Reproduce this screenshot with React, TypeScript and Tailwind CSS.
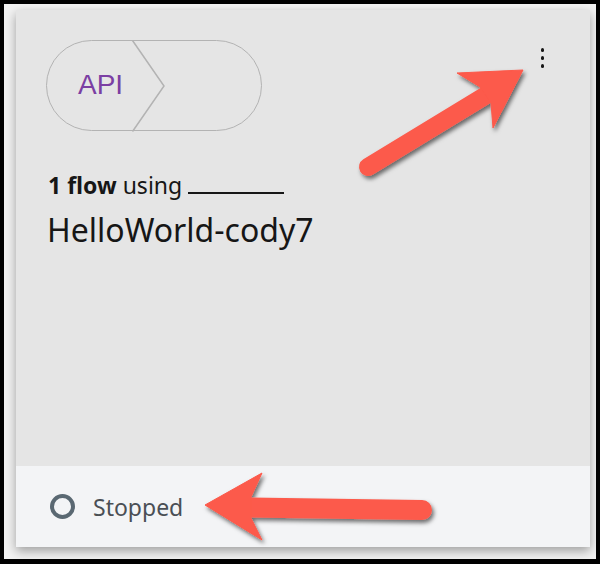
import type { FC } from 'react';

const Arrows: FC = () => (
  <svg className="absolute inset-0 pointer-events-none" width="600" height="564" viewBox="0 0 600 564">
    <defs>
      <filter id="arrowShadow" x="-20%" y="-20%" width="140%" height="140%">
        <feDropShadow dx="2" dy="3" stdDeviation="2" floodColor="#000" floodOpacity="0.55" />
      </filter>
    </defs>
    {/* arrow pointing at the menu */}
    <g filter="url(#arrowShadow)" fill="#fc5a4b" stroke="#fc5a4b">
      <line x1="368" y1="167" x2="488" y2="94" strokeWidth="18" strokeLinecap="round" />
      <polygon points="523,70 457,73 480,87 491,103 493,128" strokeWidth="1" />
    </g>
    {/* arrow pointing at the status */}
    <g filter="url(#arrowShadow)" fill="#fc5a4b" stroke="#fc5a4b">
      <line x1="250" y1="507.5" x2="422" y2="510" strokeWidth="20" strokeLinecap="round" />
      <polygon points="205,505 262,473 251,497 251,518 262,540" strokeWidth="1" />
    </g>
  </svg>
);

const App: FC = () => {
  return (
    <div className="relative w-[600px] h-[564px] bg-black pt-[4px] pl-[4px] pr-[4px] pb-[5px]">
      <div className="h-full bg-[#f2f2f2] pt-[6px] pl-[12px] pr-[6px] pb-[12px]">
        <div className="h-full flex flex-col shadow-[0_4px_10px_rgba(0,0,0,0.35)] font-['Noto_Sans',sans-serif] text-[#161616]">
          {/* Card body */}
          <div className="relative flex-1 bg-[#e5e5e5] pl-[30px] pt-[30px]">
            <div className="relative w-[216px] h-[91px] rounded-full border-[1.5px] border-[#b3b3b3]">
              <span className="absolute left-[31px] top-[27px] text-[28px] leading-[34px] text-[#7b3fa3] font-['Liberation_Sans',sans-serif]">
                API
              </span>
              <svg className="absolute left-[84px] top-[-1px]" width="36" height="92" viewBox="0 0 36 92">
                <polyline points="1.5,0.5 33,46 1.5,91.5" fill="none" stroke="#b3b3b3" strokeWidth="1.5" />
              </svg>
            </div>

            <div className="absolute right-[46px] top-[38px] flex flex-col gap-[4.5px]">
              <span className="block w-[3.5px] h-[3.5px] rounded-full bg-[#161616]" />
              <span className="block w-[3.5px] h-[3.5px] rounded-full bg-[#161616]" />
              <span className="block w-[3.5px] h-[3.5px] rounded-full bg-[#161616]" />
            </div>

            <div className="mt-[39px] ml-[2px] flex items-end text-[23px] leading-[30px]">
              <span className="font-bold">1 flow</span>
              <span className="ml-[6px]">using</span>
              <span className="ml-[6px] mb-[6px] w-[96px] border-b-[2px] border-[#161616]" />
            </div>
            <div className="ml-[1px] mt-[10px] text-[32px] leading-[40px]">HelloWorld-cody7</div>
          </div>

          {/* Footer */}
          <div className="h-[81px] bg-[#f3f4f6] flex items-center pl-[34px]">
            <span className="block w-[25px] h-[25px] rounded-full border-[4px] border-[#5a6872]" />
            <span className="ml-[18px] text-[23px] leading-[28px] text-[#4a4f55]">Stopped</span>
          </div>
        </div>
      </div>
      <Arrows />
    </div>
  );
};

export default App;
